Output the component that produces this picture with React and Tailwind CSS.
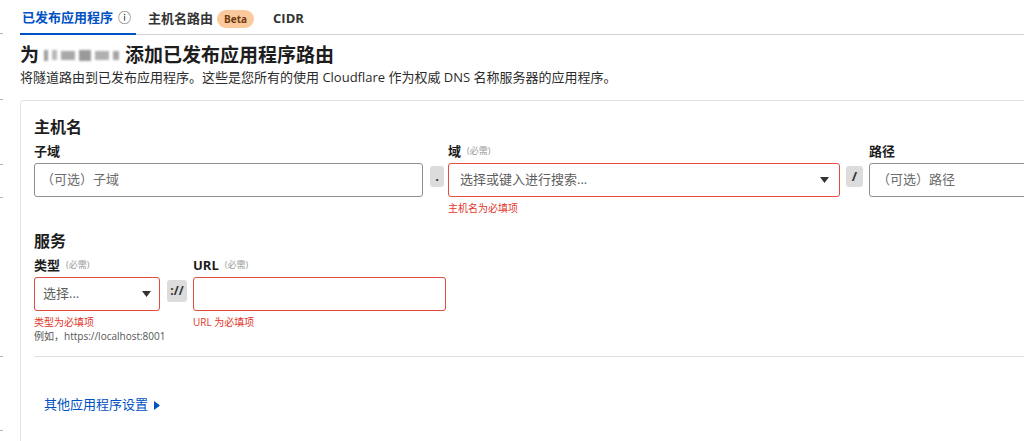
import React from 'react';

const Caret = () => (
  <svg width="9" height="6" viewBox="0 0 9 6" className="shrink-0">
    <path d="M0 0h9L4.5 6z" fill="#333" />
  </svg>
);

const Label = ({ children, required }) => (
  <div className="h-[20px] leading-[20px] mb-[2px] flex items-center">
    <span className="text-[13px] font-bold text-[#1d1d1d]">{children}</span>
    {required && <span className="ml-[6px] text-[9px] text-[#9a9a9a]">(必需)</span>}
  </div>
);

const Sep = ({ children, w }) => (
  <div className={`mt-[25px] h-[21px] ${w} shrink-0 rounded-[3px] bg-[#dcdcdc] flex items-center justify-center text-[13px] font-bold text-[#333]`}>
    {children}
  </div>
);

const Error = ({ children }) => (
  <div className="mt-[4px] text-[10px] leading-[14px] text-[#e2362b] whitespace-nowrap">{children}</div>
);

export default function App() {
  const ticks = [33, 99, 164, 197, 356, 430];

  return (
    <div className="flex h-[441px] w-[1024px] overflow-hidden bg-white text-[#1d1d1d] font-['Open_Sans','Noto_Sans_CJK_SC',sans-serif]">
      {/* left rail ticks */}
      <div className="w-[4px] shrink-0 flex flex-col">
        {ticks.map((y, i) => (
          <div key={i} className="h-px w-[3px] bg-[#b5b5b5]" style={{ marginTop: i === 0 ? y : y - ticks[i - 1] - 1 }} />
        ))}
      </div>

      <div className="ml-[16px] flex-1 min-w-0 flex flex-col">
        {/* tabs */}
        <div className="flex h-[35px] shrink-0 border-b border-[#cfcfcf] text-[13px]">
          <div className="flex items-center pl-[2px] pr-[5px] pt-[3px] border-b-[2px] border-[#0051c3] -mb-px text-[#0051c3] font-semibold">
            已发布应用程序
            <span className="ml-[5px] text-[13px] text-[#333] font-normal">ⓘ</span>
          </div>
          <div className="ml-[12px] flex items-center pt-[3px] font-semibold text-[#333]">
            主机名路由
            <span className="ml-[4px] rounded-full bg-[#fbc99c] px-[7px] h-[18px] leading-[18px] text-[10px] font-bold text-[#6e3a10]">Beta</span>
          </div>
          <div className="ml-[19px] flex items-center pt-[3px] font-bold text-[#333]">CIDR</div>
        </div>

        {/* heading */}
        <h1 className="mt-[7px] h-[26px] leading-[26px] text-[19px] font-bold flex items-center">
          为
          <span className="ml-[5px] mr-[6px] flex items-center gap-[4px] blur-[1.3px]">
            <span className="h-[11px] w-[4px] bg-[#9d9d9d]" />
            <span className="h-[10px] w-[5px] bg-[#b8b8b8]" />
            <span className="h-[9px] w-[14px] bg-[#a8a8a8]" />
            <span className="h-[11px] w-[12px] bg-[#9a9a9a]" />
            <span className="h-[9px] w-[14px] bg-[#b0b0b0]" />
            <span className="h-[9px] w-[6px] bg-[#a5a5a5]" />
          </span>
          添加已发布应用程序路由
        </h1>
        <p className="h-[18px] leading-[18px] text-[13px] text-[#2b2b2b]">
          将隧道路由到已发布应用程序。这些是您所有的使用 Cloudflare 作为权威 DNS 名称服务器的应用程序。
        </p>

        {/* card */}
        <div className="mt-[14px] mr-[-40px] flex-1 rounded-tl-[4px] border-t border-l border-[#e3e3e3] pt-[16px] pl-[13px] pr-[13px]">
          <h2 className="h-[20px] leading-[20px] text-[16px] font-bold">主机名</h2>
          <div className="mt-[4px] flex items-start">
            <div className="w-[389px] shrink-0">
              <Label>子域</Label>
              <div className="h-[34px] rounded-[3px] border border-[#8f8f8f] pl-[6px] flex items-center text-[13px] text-[#6b6b6b]">（可选）子域</div>
            </div>
            <div className="ml-[7px]"><Sep w="w-[14px]">.</Sep></div>
            <div className="ml-[4px] w-[392px] shrink-0">
              <Label required>域</Label>
              <div className="h-[34px] rounded-[3px] border border-[#e24b40] pl-[11px] pr-[10px] flex items-center justify-between text-[13px] text-[#5e5e5e]">
                <span>选择或键入进行搜索...</span>
                <Caret />
              </div>
              <Error>主机名为必填项</Error>
            </div>
            <div className="ml-[6px]"><Sep w="w-[17px]">/</Sep></div>
            <div className="ml-[6px] flex-1">
              <Label>路径</Label>
              <div className="h-[34px] rounded-[3px] border border-[#8f8f8f] pl-[7px] flex items-center text-[13px] text-[#6b6b6b]">（可选）路径</div>
            </div>
          </div>

          <h2 className="mt-[16px] h-[20px] leading-[20px] text-[16px] font-bold">服务</h2>
          <div className="mt-[4px] flex items-start">
            <div className="w-[126px] shrink-0">
              <Label required>类型</Label>
              <div className="h-[34px] rounded-[3px] border border-[#e24b40] pl-[8px] pr-[8px] flex items-center justify-between text-[13px] text-[#5e5e5e]">
                <span>选择...</span>
                <Caret />
              </div>
              <Error>类型为必填项</Error>
              <div className="text-[10px] leading-[14px] text-[#555] whitespace-nowrap">例如，https://localhost:8001</div>
            </div>
            <div className="ml-[7px]">
              <div className="mt-[25px] h-[22px] w-[20px] rounded-[3px] bg-[#dcdcdc] flex items-center justify-center text-[12px] font-bold text-[#333]">://</div>
            </div>
            <div className="ml-[6px] w-[253px] shrink-0">
              <Label required>URL</Label>
              <div className="h-[34px] rounded-[3px] border border-[#e24b40]" />
              <Error>URL 为必填项</Error>
            </div>
          </div>

          <div className="mt-[13px] border-t border-[#dedede]" />

          <div className="mt-[39px] pl-[10px] h-[18px] flex items-center text-[13px] text-[#0051c3]">
            其他应用程序设置
            <svg width="6" height="9" viewBox="0 0 6 9" className="ml-[6px]">
              <path d="M0 0v9l6-4.5z" fill="#0051c3" />
            </svg>
          </div>
        </div>
      </div>
    </div>
  );
}
